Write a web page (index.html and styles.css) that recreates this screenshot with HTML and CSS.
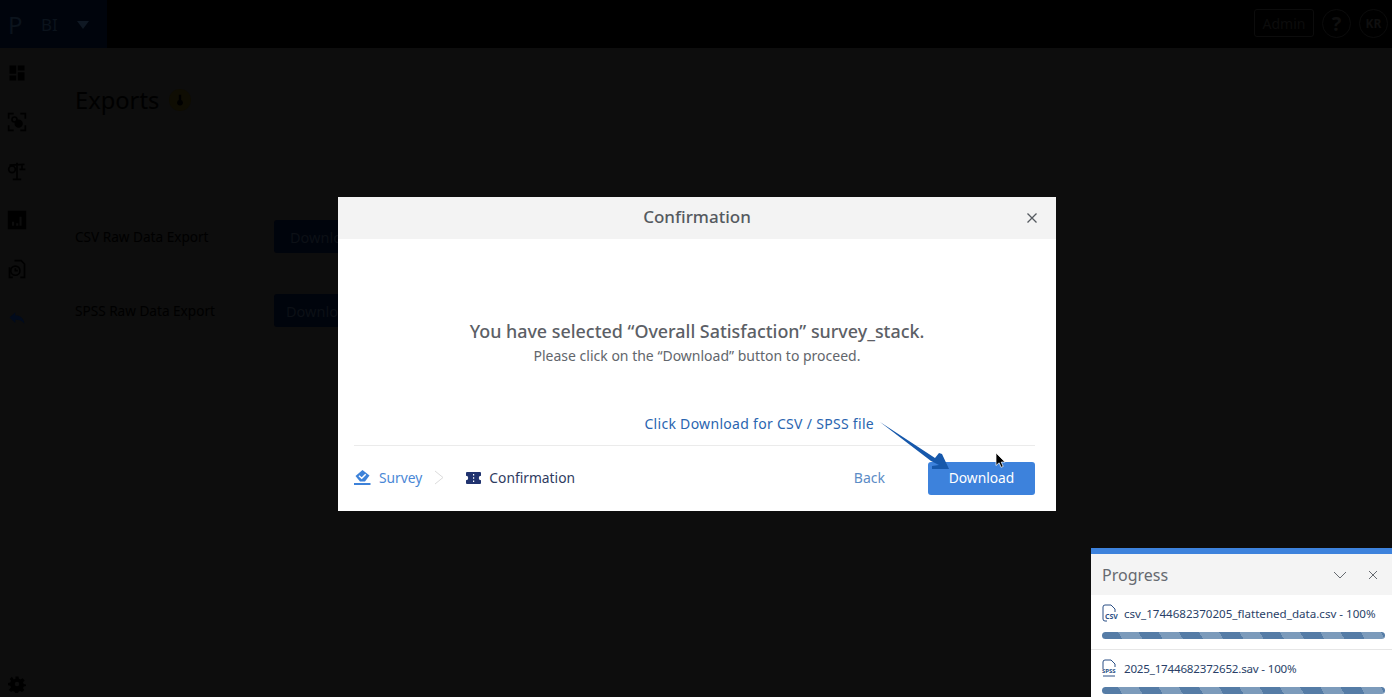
FILE: index.html
```html
<!DOCTYPE html>
<html lang="en">
<head>
    <meta charset="UTF-8">
    <meta name="viewport" content="width=device-width, initial-scale=1.0">
    <title>Exports</title>
    <link rel="stylesheet" href="styles.css">
</head>
<body>
    <header class="topbar">
        <div class="brand">
            <span class="brand-logo">P</span>
            <span class="brand-name">BI</span>
            <span class="brand-caret"></span>
        </div>
        <div class="topbar-right">
            <span class="role-btn">Admin</span>
            <span class="round-btn help">?</span>
            <span class="round-btn initials">KR</span>
        </div>
    </header>

    <div class="page">
        <nav class="sidebar">
            <div class="nav-items">
                <svg class="nav-icon" viewBox="0 0 24 24"><path d="M3 3h8v10H3zM13 3h8v6h-8zM13 11h8v10h-8zM3 15h8v6H3z"/></svg>
                <svg class="nav-icon nav-line" viewBox="0 0 24 24"><path d="M2 8V2h6M16 2h6v6M22 16v6h-6M8 22H2v-6"/><circle cx="9" cy="9" r="3"/><circle cx="14" cy="14" r="4" fill="#000"/></svg>
                <svg class="nav-icon nav-line" viewBox="0 0 24 24"><path d="M12 2v20M7 22h10M3 5l18-1M18 4v6M15 10h7"/><circle cx="6" cy="10" r="4"/></svg>
                <svg class="nav-icon" viewBox="0 0 24 24"><path fill-rule="evenodd" d="M1 1h22v22H1zM6 14v5h2.500v-5zM11 16v3h2.500v-3zM15 8v11h2.500V8z"/></svg>
                <svg class="nav-icon nav-line" viewBox="0 0 24 24"><path d="M9 2h8l4 4v16h-5M3 10v12h4"/><circle cx="10" cy="14" r="5.500"/><path d="M10 11v3h3"/></svg>
                <svg class="nav-icon nav-back" viewBox="0 0 24 24"><path d="M10 5v4c6 0 10 3 11 10-3-4-6-5-11-5v4L3 11.500z"/></svg>
            </div>
            <svg class="nav-icon nav-gear" viewBox="0 0 24 24"><path fill-rule="evenodd" d="M10 2h4l.6 3 2.200 1 2.600-1.600 2.800 2.800L20 9.800l1 2.200 3 .6v-1 3l-3 .6-1 2.200 1.600 2.600-2.800 2.800-2.600-1.600-2.200 1-.6 1.800h-4l-.6-1.800-2.200-1-2.600 1.600-2.800-2.800L4 16.400l-1-2.200-3-.6v-3l3-.6 1-2.200-1.600-2.600 2.800-2.800L7.800 6l2.200-1zM12 9a3 3 0 1 0 0 6 3 3 0 0 0 0-6z"/></svg>
        </nav>

        <main class="content">
            <div class="title-row">
                <h1>Exports</h1>
                <span class="title-badge">
                    <svg viewBox="0 0 24 24"><path d="M10 3h4v9a5 5 0 1 1-4 0z"/></svg>
                </span>
            </div>
            <div class="export-row">
                <span class="export-label">CSV Raw Data Export</span>
                <span class="export-btn">Download</span>
            </div>
            <div class="export-row">
                <span class="export-label">SPSS Raw Data Export</span>
                <span class="export-btn export-btn-tight">Download</span>
            </div>
        </main>
    </div>

    <section class="modal">
        <div class="modal-head">
            <h2>Confirmation</h2>
            <svg class="modal-close" viewBox="0 0 12 12"><path d="M1.500 1.500l9 9M10.500 1.500l-9 9"/></svg>
        </div>
        <div class="modal-body">
            <p class="modal-lead">You have selected “Overall Satisfaction” survey_stack.</p>
            <p class="modal-sub">Please click on the “Download” button to proceed.</p>
        </div>
        <p class="modal-hint">Click Download for CSV / SPSS file</p>
        <div class="modal-foot">
            <div class="steps">
                <svg class="step-icon" viewBox="0 0 17 15"><path d="M8.500 0l7 5.500-4.500 6H6L1.500 6z" fill="#3d82d9"/><path d="M5 5.800l2.700 2.400 4-4" fill="none" stroke="#fff" stroke-width="1.500"/><path d="M0 13h16.500v2H0z" fill="#3d82d9"/></svg>
                <span class="step step-done">Survey</span>
                <svg class="step-chevron" viewBox="0 0 10 15"><path d="M1 1l8 6.500L1 14"/></svg>
                <svg class="step-icon step-ticket" viewBox="0 0 15 12"><path d="M1 0h13a1 1 0 0 1 1 1v2.800a2.200 2.200 0 0 0 0 4.400V11a1 1 0 0 1-1 1H1a1 1 0 0 1-1-1V8.200a2.200 2.200 0 0 0 0-4.400V1a1 1 0 0 1 1-1z" fill="#20336f"/><path d="M7 2h1.200v1.500H7zM7 5.200h1.200v1.500H7zM7 8.500h1.200V10H7z" fill="#fff"/></svg>
                <span class="step step-current">Confirmation</span>
            </div>
            <div class="foot-actions">
                <span class="back-link">Back</span>
                <span class="download-btn">Download</span>
            </div>
        </div>
    </section>

    <svg class="annotation" viewBox="0 0 72 54">
        <path d="M0 0L55 36 59 31 62 32 69 47 52 47 52 44 59 43 51 39z" fill="#1658ab"/>
    </svg>
    <svg class="cursor" viewBox="0 0 12 20"><path d="M1 1v14l3.500-3 2.200 5 2.300-1-2.200-4.800H11z" fill="#000" stroke="#fff" stroke-width=".8"/></svg>

    <aside class="progress">
        <div class="progress-head">
            <span class="progress-title">Progress</span>
            <svg class="progress-chevron" viewBox="0 0 14 8"><path d="M1 1l6 6 6-6"/></svg>
            <svg class="progress-close" viewBox="0 0 10 10"><path d="M1 1l8 8M9 1L1 9"/></svg>
        </div>
        <div class="progress-item">
            <div class="progress-name">
                <span class="file-icon">
                    <svg viewBox="0 0 15 18"><path d="M1 3a2 2 0 0 1 2-2h6l4 4v3M1 3v12a2 2 0 0 0 2 2h2"/></svg>
                    <i>CSV</i>
                </span>
                <span>csv_1744682370205_flattened_data.csv - 100%</span>
            </div>
            <div class="bar"></div>
        </div>
        <div class="progress-item">
            <div class="progress-name progress-name-digits">
                <span class="file-icon file-spss">
                    <svg viewBox="0 0 15 18"><path d="M1 3a2 2 0 0 1 2-2h6l4 4v3M1 3v7M1 17h12"/></svg>
                    <i>SPSS</i>
                </span>
                <span>2025_1744682372652.sav - 100%</span>
            </div>
            <div class="bar"></div>
        </div>
    </aside>
</body>
</html>
```

FILE: styles.css
```css
html, body {
    height: 100%;
}

body {
    margin: 0;
    overflow: hidden;
    background-color: #0d0d0d;
    font-family: 'Noto Sans', sans-serif;
    color: #000;
}

h1, h2, p {
    margin: 0;
    font-weight: normal;
}

.topbar {
    display: flex;
    justify-content: space-between;
    align-items: center;
    height: 48px;
    background-color: #000;
}

.brand {
    display: flex;
    align-items: center;
    width: 107px;
    height: 48px;
    box-sizing: border-box;
    padding-left: 8px;
    background-color: #00040c;
}

.brand-logo {
    width: 33px;
    font-size: 24px;
    color: #0b131c;
}

.brand-name {
    width: 36px;
    font-size: 17px;
    color: #0b131c;
}

.brand-caret {
    width: 0;
    height: 0;
    margin-top: 2px;
    border-left: 6px solid transparent;
    border-right: 6px solid transparent;
    border-top: 8px solid #0f1823;
}

.topbar-right {
    display: flex;
    align-items: center;
    gap: 8px;
    padding: 0 4px 2px 0;
}

.role-btn {
    display: flex;
    align-items: center;
    justify-content: center;
    width: 58px;
    height: 26px;
    border: 1px solid #0c0c0c;
    border-radius: 3px;
    font-size: 14px;
    color: #0c0c0c;
}

.round-btn {
    display: flex;
    align-items: center;
    justify-content: center;
    width: 27px;
    height: 27px;
    border: 1px solid #0c0c0c;
    border-radius: 50%;
    color: #0f0f0f;
}

.help {
    font-size: 20px;
    font-weight: bold;
}

.initials {
    font-size: 12px;
    font-weight: bold;
}

.page {
    display: flex;
    height: 649px;
}

.sidebar {
    display: flex;
    flex-direction: column;
    justify-content: space-between;
    align-items: center;
    width: 34px;
    padding-bottom: 4px;
}

.nav-items {
    display: flex;
    flex-direction: column;
    gap: 29px;
    padding-top: 15px;
}

.nav-icon {
    display: block;
    width: 20px;
    height: 20px;
    fill: #000;
}

.nav-line {
    fill: none;
    stroke: #000;
    stroke-width: 2;
}

.nav-back {
    fill: #020b1c;
}

.nav-gear {
    width: 18px;
    height: 18px;
}

.content {
    padding: 33px 0 0 41px;
}

.title-row {
    display: flex;
    align-items: center;
    gap: 10px;
    height: 38px;
    margin-bottom: 101px;
}

.title-row h1 {
    font-size: 23.700px;
    color: #000;
}

.title-badge {
    display: flex;
    align-items: center;
    justify-content: center;
    width: 22px;
    height: 22px;
    border-radius: 50%;
    background-color: #0f0d03;
}

.title-badge svg {
    width: 14px;
    height: 14px;
    fill: #000;
}

.export-row {
    display: flex;
    align-items: center;
    height: 33px;
    margin-bottom: 41px;
}

.export-label {
    width: 199px;
    font-size: 13.600px;
    color: #000;
}

.export-btn {
    display: flex;
    align-items: center;
    height: 33px;
    padding: 0 16px;
    border-radius: 3px;
    font-size: 14.500px;
    color: #0c1016;
    background-color: #00040c;
}

.export-btn-tight {
    padding: 0 12px;
}

/* modal sits over the dimmed page */
.modal {
    position: absolute;
    left: 338px;
    top: 197px;
    display: flex;
    flex-direction: column;
    width: 718px;
    height: 314px;
    background-color: #fff;
}

.modal-head {
    position: relative;
    display: flex;
    align-items: center;
    justify-content: center;
    height: 39px;
    padding-bottom: 3px;
    background-color: #f3f3f3;
}

.modal-head h2 {
    font-size: 17px;
    font-weight: 500;
    color: #555a60;
}

.modal-close {
    position: absolute;
    right: 18px;
    top: 15px;
    width: 12px;
    height: 12px;
    fill: none;
    stroke: #555a60;
    stroke-width: 1.300;
}

.modal-body {
    padding-top: 80px;
    text-align: center;
}

.modal-lead {
    font-size: 17.900px;
    font-weight: 500;
    line-height: 24px;
    color: #5c6066;
}

.modal-sub {
    margin-top: 3px;
    font-size: 14px;
    line-height: 20px;
    color: #62666c;
}

.modal-hint {
    margin-top: 48px;
    padding-right: 182px;
    font-size: 14px;
    letter-spacing: .3px;
    line-height: 20px;
    text-align: right;
    color: #2a65b0;
}

.modal-foot {
    display: flex;
    justify-content: space-between;
    align-items: center;
    margin: 11px 21px 0 16px;
    padding-top: 16px;
    border-top: 1px solid #ebebeb;
}

.steps {
    display: flex;
    align-items: center;
    padding-bottom: 2px;
}

.step-icon {
    width: 17px;
    height: 15px;
    margin-right: 8px;
}

.step-ticket {
    width: 15px;
    height: 12px;
    margin-left: 1px;
}

.step {
    font-size: 13.800px;
}

.step-done {
    color: #4a87d6;
}

.step-current {
    color: #2f3b5f;
}

.step-chevron {
    width: 10px;
    height: 15px;
    margin: 0 21px 0 12px;
    fill: none;
    stroke: #dcdcdc;
}

.foot-actions {
    display: flex;
    align-items: center;
    gap: 43px;
}

.back-link {
    padding-bottom: 2px;
    font-size: 14px;
    color: #5c8cc6;
}

.download-btn {
    display: flex;
    align-items: center;
    justify-content: center;
    box-sizing: border-box;
    width: 107px;
    height: 33px;
    padding-bottom: 2px;
    border-radius: 3px;
    font-size: 13.800px;
    color: #fff;
    background-color: #3d82dc;
}

.annotation {
    position: absolute;
    left: 880px;
    top: 422px;
    width: 72px;
    height: 54px;
}

.cursor {
    position: absolute;
    left: 995px;
    top: 452px;
    width: 11px;
    height: 18px;
}

.progress {
    position: absolute;
    left: 1091px;
    top: 548px;
    width: 301px;
    height: 149px;
    border-top: 6px solid #3d82dc;
    background-color: #fff;
    box-sizing: border-box;
    overflow: hidden;
}

.progress-head {
    display: flex;
    align-items: center;
    height: 41px;
    padding: 0 14px 0 11px;
    background-color: #f4f4f4;
}

.progress-title {
    flex: 1;
    font-size: 16px;
    color: #666a70;
}

.progress-chevron {
    width: 14px;
    height: 8px;
    margin-right: 21px;
    fill: none;
    stroke: #666a70;
}

.progress-close {
    width: 10px;
    height: 10px;
    fill: none;
    stroke: #666a70;
}

.progress-item {
    height: 55px;
    box-sizing: border-box;
    padding: 8px 7px 0 11px;
    border-bottom: 1px solid #e6e6e6;
}

.progress-name {
    display: flex;
    align-items: center;
    gap: 7px;
    height: 20px;
    font-size: 11.600px;
    color: #2a3f68;
}

.progress-name-digits {
    letter-spacing: -.2px;
}

.file-icon {
    position: relative;
    flex: none;
    width: 15px;
    height: 18px;
}

.file-icon svg {
    display: block;
    width: 15px;
    height: 18px;
    fill: none;
    stroke: #2a4f85;
}

.file-icon i {
    position: absolute;
    left: 3px;
    bottom: 1px;
    font-size: 7px;
    font-style: normal;
    font-weight: bold;
    letter-spacing: 0;
    line-height: 9px;
    color: #2a4f85;
}

.file-spss i {
    left: 0;
    font-size: 6px;
}

.bar {
    height: 7px;
    margin-top: 9px;
    border-radius: 4px;
    background: repeating-linear-gradient(60deg, #557ca6 0, #557ca6 17.500px, #7c9bbb 17.500px, #7c9bbb 35px);
}
```
